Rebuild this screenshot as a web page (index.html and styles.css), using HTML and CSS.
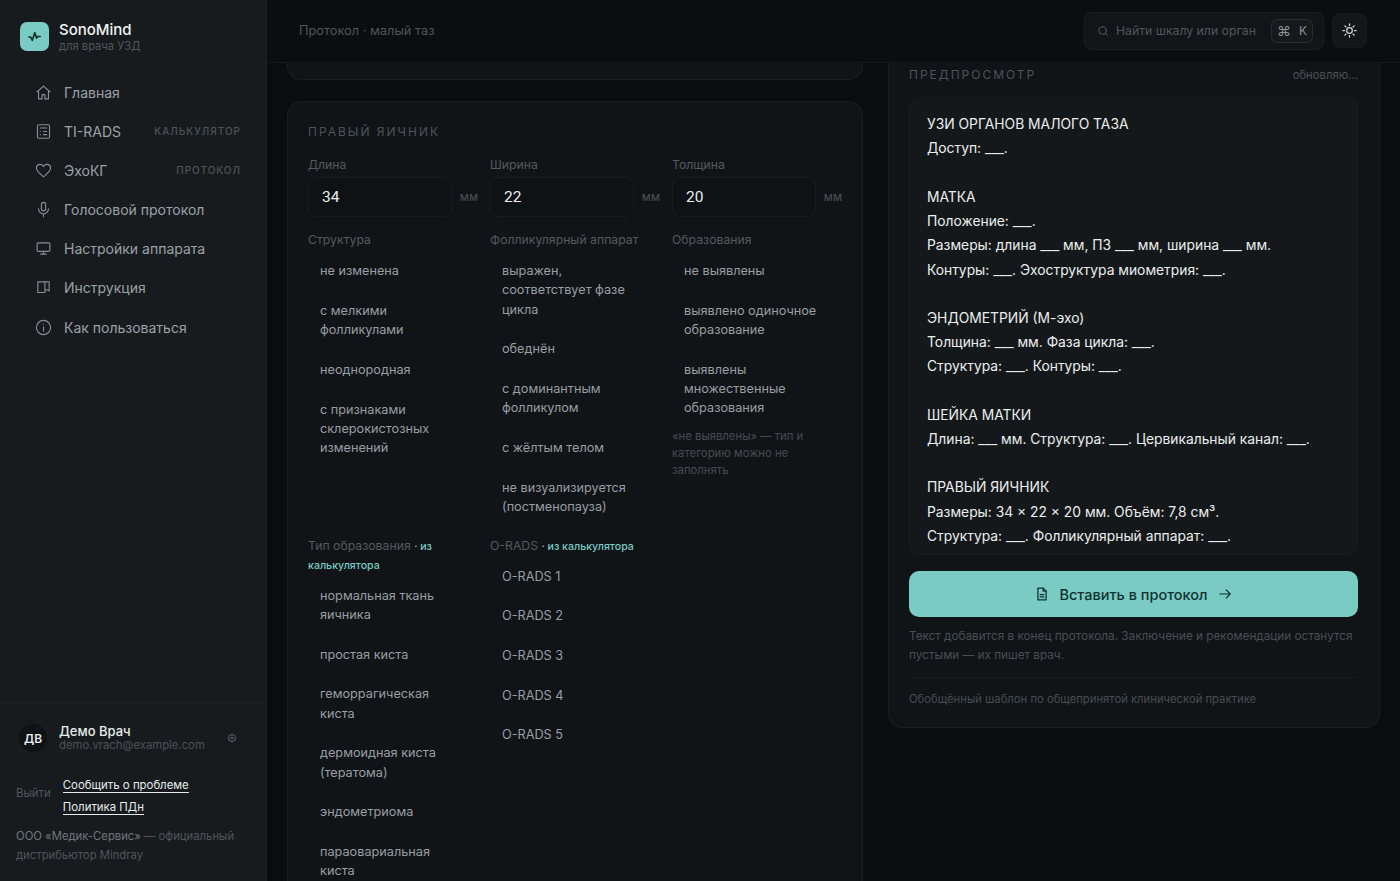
FILE: index.html
```html
<!DOCTYPE html>
<html lang="ru">

<head>
    <meta charset="UTF-8">
    <meta name="viewport" content="width=device-width, initial-scale=1.0">
    <title>SonoMind</title>
    <link rel="stylesheet" href="styles.css">
</head>

<body>
    <div class="app">
        <aside class="sidebar">
            <div class="brand">
                <div class="logo">
                    <svg width="13" height="13" viewBox="0 0 24 24" fill="none" stroke="#12302e" stroke-width="3" stroke-linecap="round" stroke-linejoin="round"><path d="M1.500 13H5l3 6 4.500-14 3.500 10 2-3h4.500"/></svg>
                </div>
                <div>
                    <div class="brand-name">SonoMind</div>
                    <div class="brand-sub">для врача УЗД</div>
                </div>
            </div>

            <nav class="nav">
                <a class="nav-item">
                    <svg class="icon" viewBox="0 0 24 24"><path d="M3 11l9-8 9 8"/><path d="M5 9.500V21h5v-6h4v6h5V9.500"/></svg>
                    <span>Главная</span>
                </a>
                <a class="nav-item">
                    <svg class="icon" viewBox="0 0 24 24"><rect x="3.500" y="2.500" width="17" height="19" rx="2"/><path d="M7.500 7h9M7.500 12h.01M12 12h4.500M7.500 16.500h.01M12 16.500h4.500"/></svg>
                    <span>TI-RADS</span>
                    <span class="tag">калькулятор</span>
                </a>
                <a class="nav-item">
                    <svg class="icon" viewBox="0 0 24 24"><path d="M12 21C6 16 2 12.500 2 8.500A5.200 5.200 0 0 1 12 6.500a5.200 5.200 0 0 1 10 2C22 12.500 18 16 12 21z"/></svg>
                    <span>ЭхоКГ</span>
                    <span class="tag">протокол</span>
                </a>
                <a class="nav-item">
                    <svg class="icon" viewBox="0 0 24 24"><rect x="9" y="2" width="6" height="12" rx="3"/><path d="M5 11a7 7 0 0 0 14 0M12 18v4"/></svg>
                    <span>Голосовой протокол</span>
                </a>
                <a class="nav-item">
                    <svg class="icon" viewBox="0 0 24 24"><rect x="3" y="4" width="18" height="12" rx="1.500"/><path d="M12 16v4M8 20h8"/></svg>
                    <span>Настройки аппарата</span>
                </a>
                <a class="nav-item">
                    <svg class="icon" viewBox="0 0 24 24"><path d="M4 4h10v15H4zM14 4h6v13l-3-2-3 2"/></svg>
                    <span>Инструкция</span>
                </a>
                <a class="nav-item">
                    <svg class="icon" viewBox="0 0 24 24"><circle cx="12" cy="12" r="10"/><path d="M12 11v6M12 7.500h.01"/></svg>
                    <span>Как пользоваться</span>
                </a>
            </nav>

            <div class="side-footer">
                <div class="user">
                    <div class="avatar">ДВ</div>
                    <div class="user-info">
                        <div class="user-name">Демо Врач</div>
                        <div class="user-mail">demo.vrach@example.com</div>
                    </div>
                    <svg class="gear" viewBox="0 0 24 24"><circle cx="12" cy="12" r="8"/><circle cx="12" cy="12" r="2.500"/><path d="M12 1.500v2.500M12 20v2.500M1.500 12H4M20 12h2.500"/></svg>
                </div>
                <div class="side-links">
                    <span class="logout">Выйти</span>
                    <div class="links">
                        <a>Сообщить о проблеме</a>
                        <a>Политика ПДн</a>
                    </div>
                </div>
                <p class="distributor"><b>ООО «Медик-Сервис»</b> — официальный дистрибьютор Mindray</p>
            </div>
        </aside>

        <div class="main">
            <header class="topbar">
                <div class="crumb">Протокол · малый таз</div>
                <div class="search">
                    <svg class="search-icon" viewBox="0 0 24 24"><circle cx="11" cy="11" r="7.500"/><path d="M21 21l-4.500-4.500"/></svg>
                    <span class="search-text">Найти шкалу или орган</span>
                    <span class="kbd"><span class="kbd-cmd">⌘</span><span>K</span></span>
                </div>
                <div class="theme-btn">
                    <svg width="15" height="15" viewBox="0 0 24 24" fill="none" stroke="#d5d9da" stroke-width="2" stroke-linecap="round"><circle cx="12" cy="12" r="4.500"/><path d="M12 1.500v2.500M12 20v2.500M1.500 12H4M20 12h2.500M4.600 4.600l1.700 1.700M17.700 17.700l1.700 1.700M4.600 19.400l1.700-1.700M17.700 6.300l1.700-1.700"/></svg>
                </div>
            </header>

            <div class="content">
                <div class="left-col">
                    <div class="card card-stub"></div>

                    <section class="card form-card">
                        <h2 class="section-title">Правый яичник</h2>

                        <div class="grid-3 sizes-row">
                            <div>
                                <div class="field-label">Длина</div>
                                <div class="size-row"><div class="size-input">34</div><span class="unit">мм</span></div>
                            </div>
                            <div>
                                <div class="field-label">Ширина</div>
                                <div class="size-row"><div class="size-input">22</div><span class="unit">мм</span></div>
                            </div>
                            <div>
                                <div class="field-label">Толщина</div>
                                <div class="size-row"><div class="size-input">20</div><span class="unit">мм</span></div>
                            </div>
                        </div>

                        <div class="grid-3 options-row">
                            <div>
                                <div class="field-label">Структура</div>
                                <div class="option">не изменена</div>
                                <div class="option">с мелкими фолликулами</div>
                                <div class="option">неоднородная</div>
                                <div class="option">с признаками склерокистозных изменений</div>
                            </div>
                            <div>
                                <div class="field-label">Фолликулярный аппарат</div>
                                <div class="option">выражен, соответствует фазе цикла</div>
                                <div class="option">обеднён</div>
                                <div class="option">с доминантным фолликулом</div>
                                <div class="option">с жёлтым телом</div>
                                <div class="option">не визуализируется (постменопауза)</div>
                            </div>
                            <div>
                                <div class="field-label">Образования</div>
                                <div class="option">не выявлены</div>
                                <div class="option">выявлено одиночное образование</div>
                                <div class="option">выявлены множественные образования</div>
                                <p class="field-note">«не выявлены» — тип и категорию можно не заполнять</p>
                            </div>
                        </div>

                        <div class="grid-3 options-row second">
                            <div>
                                <div class="field-label">Тип образования <em>· из калькулятора</em></div>
                                <div class="option">нормальная ткань яичника</div>
                                <div class="option">простая киста</div>
                                <div class="option">геморрагическая киста</div>
                                <div class="option">дермоидная киста (тератома)</div>
                                <div class="option">эндометриома</div>
                                <div class="option">параовариальная киста</div>
                            </div>
                            <div>
                                <div class="field-label">O-RADS <em>· из калькулятора</em></div>
                                <div class="option">O-RADS 1</div>
                                <div class="option">O-RADS 2</div>
                                <div class="option">O-RADS 3</div>
                                <div class="option">O-RADS 4</div>
                                <div class="option">O-RADS 5</div>
                            </div>
                        </div>
                    </section>
                </div>

                <section class="card preview-card">
                    <div class="preview-head">
                        <h2 class="section-title">Предпросмотр</h2>
                        <span class="updating">обновляю...</span>
                    </div>
                    <div class="preview-box">УЗИ ОРГАНОВ МАЛОГО ТАЗА
Доступ: ___.

МАТКА
Положение: ___.
Размеры: длина ___ мм, ПЗ ___ мм, ширина ___ мм.
Контуры: ___. Эхоструктура миометрия: ___.

ЭНДОМЕТРИЙ (М-эхо)
Толщина: ___ мм. Фаза цикла: ___.
Структура: ___. Контуры: ___.

ШЕЙКА МАТКИ
Длина: ___ мм. Структура: ___. Цервикальный канал: ___.

ПРАВЫЙ ЯИЧНИК
Размеры: 34 × 22 × 20 мм. Объём: 7,8 см³.
Структура: ___. Фолликулярный аппарат: ___.</div>
                    <button class="insert-btn" type="button">
                        <svg width="14" height="14" viewBox="0 0 24 24" fill="none" stroke="#10312f" stroke-width="2.200" stroke-linecap="round" stroke-linejoin="round"><path d="M14 2H5v20h14V7z"/><path d="M14 2v5h5M9 13h6M9 17h6"/></svg>
                        <span>Вставить в протокол</span>
                        <svg width="14" height="14" viewBox="0 0 24 24" fill="none" stroke="#10312f" stroke-width="2" stroke-linecap="round" stroke-linejoin="round"><path d="M3 12h18M14 5l7 7-7 7"/></svg>
                    </button>
                    <p class="help">Текст добавится в конец протокола. Заключение и рекомендации останутся пустыми — их пишет врач.</p>
                    <p class="source">Обобщённый шаблон по общепринятой клинической практике</p>
                </section>
            </div>
        </div>
    </div>
</body>

</html>
```

FILE: styles.css
```css
* {
    box-sizing: border-box;
}

body {
    margin: 0;
    height: 881px;
    overflow: hidden;
    background-color: #0a0c0e;
    color: #d8dcdd;
    font-family: Inter, "Noto Sans", sans-serif;
}

.app {
    display: grid;
    grid-template-columns: 267px 1fr;
    height: 881px;
}

/* Sidebar */
.sidebar {
    display: flex;
    flex-direction: column;
    background-color: #171b1e;
    border-right: 1px solid #1c2023;
}

.brand {
    display: flex;
    align-items: center;
    gap: 10px;
    padding: 9px 20px 0;
    height: 64px;
}

.logo {
    display: flex;
    align-items: center;
    justify-content: center;
    width: 29px;
    height: 29px;
    border-radius: 7px;
    background-color: #79cbc3;
}

.brand-name {
    color: #f1f3f3;
    font-size: 15px;
    font-weight: 500;
    line-height: 18px;
}

.brand-sub {
    color: #50565a;
    font-size: 11.2px;
    line-height: 14px;
}

.nav {
    display: flex;
    flex-direction: column;
    gap: 1.2px;
    padding: 9px 25px 0 35px;
}

.nav-item {
    display: flex;
    align-items: center;
    gap: 12px;
    height: 38px;
    color: #9ba2a6;
    font-size: 14px;
}

.icon {
    flex: none;
    width: 17px;
    height: 17px;
    fill: none;
    stroke: #878e92;
    stroke-width: 1.6;
    stroke-linecap: round;
    stroke-linejoin: round;
}

.tag {
    margin-left: auto;
    color: #4d5357;
    font-size: 10px;
    font-weight: 500;
    letter-spacing: 1px;
    text-transform: uppercase;
}

.side-footer {
    margin-top: auto;
    padding: 20px 16px 16px;
    border-top: 1px solid #1c2023;
}

.user {
    display: flex;
    align-items: center;
    gap: 12px;
    padding: 0 3px;
}

.avatar {
    display: flex;
    align-items: center;
    justify-content: center;
    flex: none;
    width: 28px;
    height: 28px;
    border-radius: 50%;
    background-color: #101316;
    color: #e9ecec;
    font-size: 12px;
    font-weight: 600;
}

.user-info {
    flex: 1;
}

.user-name {
    color: #e8ebeb;
    font-size: 13px;
    font-weight: 500;
    line-height: 15px;
}

.user-mail {
    color: #4b5155;
    font-size: 11.3px;
    line-height: 13px;
}

.gear {
    width: 10px;
    height: 10px;
    margin-right: 10px;
    fill: none;
    stroke: #565c60;
    stroke-width: 2.5;
}

.side-links {
    display: flex;
    align-items: center;
    gap: 12px;
    margin-top: 26px;
}

.logout {
    margin-bottom: 7px;
    color: #50565a;
    font-size: 11.4px;
}

.links {
    display: flex;
    flex-direction: column;
    align-items: flex-start;
    gap: 7px;
}

.links a {
    color: #e8ebeb;
    font-size: 11.4px;
    line-height: 14px;
    border-bottom: 1px solid #e8ebeb;
}

.distributor {
    margin: 12px 0 0;
    color: #4f5559;
    font-size: 11.3px;
    line-height: 19px;
}

.distributor b {
    color: #70777b;
    font-weight: 400;
}

/* Top bar */
.main {
    display: flex;
    flex-direction: column;
    min-width: 0;
    height: 881px;
}

.topbar {
    display: flex;
    align-items: center;
    flex: none;
    height: 63px;
    padding: 0 33px 1px 32px;
    border-bottom: 1px solid #15191b;
    background-color: #0b0d0f;
}

.crumb {
    flex: 1;
    color: #4f5559;
    font-size: 12.8px;
}

.search {
    display: flex;
    align-items: center;
    width: 240px;
    height: 38px;
    padding: 0 10px 0 12px;
    border: 1px solid #1b1f22;
    border-radius: 8px;
    background-color: #121518;
}

.search-icon {
    width: 12px;
    height: 12px;
    margin-right: 7px;
    fill: none;
    stroke: #54595d;
    stroke-width: 2;
    stroke-linecap: round;
}

.search-text {
    flex: 1;
    color: #50565a;
    font-size: 12.25px;
    white-space: nowrap;
}

.kbd {
    display: flex;
    justify-content: center;
    gap: 8px;
    flex: none;
    width: 42px;
    height: 24px;
    border: 1px solid #292e31;
    border-radius: 6px;
    background-color: #15191b;
    color: #8b9194;
    font-size: 12px;
    line-height: 22px;
}

.kbd-cmd {
    font-size: 14px;
}

.theme-btn {
    display: flex;
    align-items: center;
    justify-content: center;
    width: 35px;
    height: 35px;
    margin-left: 8px;
    border-radius: 8px;
    border: 1px solid #171b1d;
    background-color: #14171a;
}

/* Content */
.content {
    display: grid;
    grid-template-columns: 576px 492px;
    align-items: start;
    gap: 25px;
    padding-left: 20px;
    flex: 1;
    min-height: 0;
    overflow: hidden;
}

.left-col {
    display: flex;
    flex-direction: column;
    gap: 21px;
}

.card {
    border: 1px solid #1a1e21;
    border-radius: 14px;
    background-color: #111417;
}

.card-stub {
    height: 17px;
    border-top: 0;
    border-radius: 0 0 14px 14px;
}

.form-card {
    padding: 22px 20px 20px;
}

.section-title {
    margin: 0;
    color: #4d5357;
    font-size: 12px;
    font-weight: 400;
    line-height: 16px;
    letter-spacing: 2px;
    text-transform: uppercase;
}

.grid-3 {
    display: grid;
    grid-template-columns: repeat(3, 170px);
    gap: 12px;
}

.sizes-row {
    margin-top: 15px;
}

.field-label {
    color: #53595d;
    font-size: 12.25px;
    line-height: 19px;
}

.field-label em {
    color: #79cbc3;
    font-size: 10.6px;
    font-style: normal;
    font-weight: 500;
    line-height: 1;
}

.size-row {
    display: flex;
    align-items: center;
    gap: 8px;
    margin-top: 3px;
}

.size-input {
    flex: 1;
    height: 40px;
    padding: 0 13px;
    border: 1px solid #181c1f;
    border-radius: 8px;
    background-color: #0f1214;
    color: #eceeee;
    font-family: Roboto, Inter, sans-serif;
    font-size: 15.5px;
    line-height: 39px;
}

.unit {
    color: #4b5155;
    font-size: 11.8px;
}

.options-row {
    margin-top: 13px;
}

.options-row .field-label {
    margin-bottom: 2px;
}

.options-row.second {
    margin-top: 9px;
}

.option {
    padding: 10.2px 12px;
    color: #989ea2;
    font-size: 12.7px;
    line-height: 19.3px;
}

.field-note {
    margin: 0;
    color: #454b4f;
    font-size: 11.3px;
    line-height: 17px;
}

/* Preview */
.preview-card {
    padding: 0 21px 20px 20px;
    border-top: 0;
    border-radius: 0 0 14px 14px;
}

.preview-head {
    display: flex;
    align-items: flex-start;
    justify-content: space-between;
    height: 34px;
    padding-top: 4px;
}

.updating {
    color: #4b5155;
    font-size: 11.3px;
    line-height: 16px;
}

.preview-box {
    height: 458px;
    padding: 14.2px 17px;
    border: 1px solid #181c1f;
    border-radius: 10px;
    background-color: #14181a;
    color: #eceeee;
    font-size: 13.84px;
    line-height: 24.22px;
    white-space: pre-line;
    overflow: hidden;
}

.insert-btn {
    display: flex;
    align-items: center;
    justify-content: center;
    gap: 10px;
    width: 100%;
    height: 46px;
    margin-top: 16px;
    border: none;
    border-radius: 10px;
    background-color: #79cbc3;
    color: #10312f;
    font-family: inherit;
    font-size: 14.5px;
    font-weight: 500;
}

.help {
    margin: 10px 0 0;
    padding-bottom: 12px;
    border-bottom: 1px solid #1a1e21;
    color: #484e52;
    font-size: 11.75px;
    line-height: 19px;
}

.source {
    margin: 13px 0 0;
    color: #464c50;
    font-size: 11.27px;
    line-height: 16px;
}
```
